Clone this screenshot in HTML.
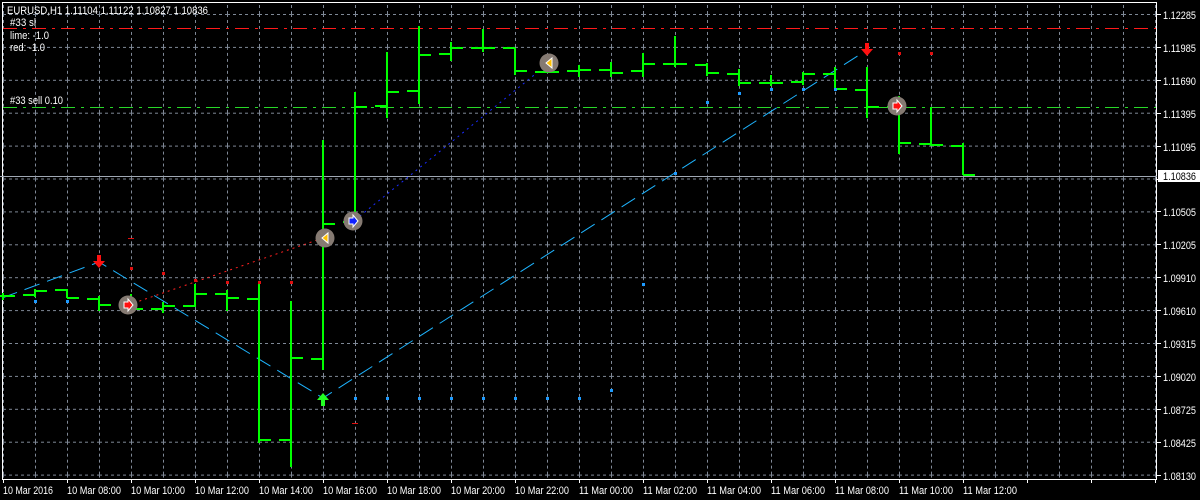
<!DOCTYPE html>
<html><head><meta charset="utf-8"><style>
html,body{margin:0;padding:0;background:#000;width:1200px;height:500px;overflow:hidden}
svg{display:block}
text{font-family:"Liberation Sans",sans-serif;font-size:11px;fill:#fff}
</style></head><body>
<svg width="1200" height="500" viewBox="0 0 1200 500" xmlns="http://www.w3.org/2000/svg" shape-rendering="crispEdges">
<defs>
<pattern id="g" x="35" y="14" width="32" height="32.9" patternUnits="userSpaceOnUse">
<path d="M0.5 0V32.9M0 0.5H32" stroke="#7f8896" stroke-width="1" stroke-dasharray="3,3" fill="none"/>
</pattern>
</defs>
<rect x="3" y="3" width="1153" height="475" fill="url(#g)"/>
<path d="M2.5 2V479.5H1156.5V2" stroke="#fff" fill="none"/>
<path d="M2 2.5H1157" stroke="#fff"/>
<g stroke="#fff">
<path d="M1157 14.5h4M1157 47.5h4M1157 80.5h4M1157 113.5h4M1157 146.5h4M1157 179.5h4M1157 211.5h4M1157 244.5h4M1157 277.5h4M1157 310.5h4M1157 343.5h4M1157 376.5h4M1157 409.5h4M1157 442.5h4M1157 475.5h4"/>
<path d="M3.5 479v4M67.5 479v4M131.5 479v4M195.5 479v4M259.5 479v4M323.5 479v4M387.5 479v4M451.5 479v4M515.5 479v4M579.5 479v4M643.5 479v4M707.5 479v4M771.5 479v4M835.5 479v4M899.5 479v4M963.5 479v4M1027.5 479v4M1091.5 479v4M1155.5 479v4"/>
</g>
<path d="M3 28.5H1156" stroke="#ff1a1a" stroke-dasharray="14,6,3,6"/>
<path d="M3 107.5H1156" stroke="#28d828" stroke-dasharray="14,6,3,6"/>
<path d="M0 176.5H1157" stroke="#a0a8b4"/>
<path d="M2 298L99 262L323 398L867 50" stroke="#1eb4ff" fill="none" stroke-dasharray="16,8" shape-rendering="auto"/>
<path d="M128 305L323 238" stroke="#ff2020" fill="none" stroke-dasharray="2,4" shape-rendering="auto"/>
<path d="M355 220L549 63" stroke="#1a2cff" fill="none" stroke-dasharray="2,4" shape-rendering="auto"/>
<path stroke="#00ff00" stroke-width="2" fill="none" d="
M3 293V300M-9 296H3M3 296H15
M35 289V297M23 295H35M35 291H47
M67 289V298M55 290H67M67 298H79
M99 296V311M87 299H99M99 305H111
M131 294V313M119 306H131M131 309H143
M163 302V313M151 309H163M163 306H175
M195 284V307M183 306H195M195 294H207
M227 290V311M215 294H227M227 298H239
M259 281V443M247 299H259M259 440H271
M291 301V467M279 440H291M291 358H303
M323 140V370M311 359H323M323 224H335
M355 92V226M343 222H355M355 107H367
M387 52V118M375 106H387M387 92H399
M419 26V104M407 91H419M419 55H431
M451 42V61M439 54H451M451 48H463
M483 29V52M471 48H483M483 48H495
M515 48V75M503 48H515M515 71H527
M547 64V72M535 72H547M547 72H559
M579 65V77M567 71H579M579 70H591
M611 62V77M599 70H611M611 73H623
M643 53V77M631 71H643M643 64H655
M675 36V67M663 64H675M675 64H687
M707 63V76M695 65H707M707 73H719
M739 69V86M727 74H739M739 83H751
M771 75V86M759 83H771M771 83H783
M803 72V85M791 82H803M803 74H815
M835 67V91M823 74H835M835 89H847
M867 67V118M855 90H867M867 107H879
M899 96V154M887 107H899M899 143H911
M931 107V146M919 144H931M931 145H943
M963 143V175M951 146H963M963 175H975"/>
<g fill="#1e9bff">
<rect x="34" y="300" width="3" height="3"/><rect x="66" y="300" width="3" height="3"/>
<rect x="354" y="397" width="3" height="3"/><rect x="386" y="397" width="3" height="3"/><rect x="418" y="397" width="3" height="3"/><rect x="450" y="397" width="3" height="3"/><rect x="482" y="397" width="3" height="3"/><rect x="514" y="397" width="3" height="3"/><rect x="546" y="397" width="3" height="3"/><rect x="578" y="397" width="3" height="3"/><rect x="610" y="389" width="3" height="3"/><rect x="642" y="283" width="3" height="3"/><rect x="674" y="172" width="3" height="3"/><rect x="706" y="101" width="3" height="3"/><rect x="738" y="92" width="3" height="3"/><rect x="770" y="88" width="3" height="3"/><rect x="802" y="88" width="3" height="3"/><rect x="834" y="88" width="3" height="3"/>
</g>
<g fill="#e01010">
<rect x="130" y="267" width="3" height="3"/><rect x="162" y="272" width="3" height="3"/><rect x="194" y="279" width="3" height="3"/><rect x="226" y="281" width="3" height="3"/><rect x="258" y="281" width="3" height="3"/><rect x="290" y="281" width="3" height="3"/>
<rect x="898" y="52" width="3" height="3"/><rect x="930" y="52" width="3" height="3"/>
<rect x="128" y="238" width="6" height="1"/><rect x="352" y="423" width="6" height="1"/>
</g>
<g fill="#857a72" shape-rendering="auto">
<circle cx="128" cy="305" r="9.5"/><circle cx="325" cy="238" r="9.5"/><circle cx="353" cy="221" r="9.5"/><circle cx="549" cy="63" r="9.5"/><circle cx="897" cy="106" r="9.5"/>
</g>
<g shape-rendering="auto">
<path d="M124 302h4v-3l5 6-5 6v-3h-4z" fill="#ff1010" stroke="#fff" stroke-width="1"/>
<path d="M893 103h4v-3l5 6-5 6v-3h-4z" fill="#ff1010" stroke="#fff" stroke-width="1"/>
<path d="M349 218h4v-3l5 6-5 6v-3h-4z" fill="#1020ff" stroke="#fff" stroke-width="1"/>
<path d="M328 233v10l-6-5z" fill="#ffc000" stroke="#fff" stroke-width="1"/>
<path d="M552 58v10l-6-5z" fill="#ffc000" stroke="#fff" stroke-width="1"/>
<path d="M97 255h4v6h4l-6 7-6-7h4z" fill="#ff1010"/>
<path d="M865 43h4v6h4l-6 7-6-7h4z" fill="#ff1010"/>
<path d="M321 406h4v-6h4l-6-7-6 7h4z" fill="#22ff22"/>
</g>
<g lengthAdjust="spacingAndGlyphs">
<text x="7" y="14" textLength="201" lengthAdjust="spacingAndGlyphs">EURUSD,H1  1.11104 1.11122 1.10827 1.10836</text>
<text x="10" y="26" textLength="26" lengthAdjust="spacingAndGlyphs">#33 sl</text>
<text x="10" y="39" textLength="39" lengthAdjust="spacingAndGlyphs">lime: -1.0</text>
<text x="10" y="51" textLength="35" lengthAdjust="spacingAndGlyphs">red: -1.0</text>
<text x="10" y="104" textLength="53" lengthAdjust="spacingAndGlyphs">#33 sell 0.10</text>
</g>
<g>
<text x="1163" y="19" textLength="33" lengthAdjust="spacingAndGlyphs">1.12285</text><text x="1163" y="52" textLength="33" lengthAdjust="spacingAndGlyphs">1.11985</text><text x="1163" y="85" textLength="33" lengthAdjust="spacingAndGlyphs">1.11690</text><text x="1163" y="118" textLength="33" lengthAdjust="spacingAndGlyphs">1.11395</text><text x="1163" y="151" textLength="33" lengthAdjust="spacingAndGlyphs">1.11095</text><text x="1163" y="216" textLength="33" lengthAdjust="spacingAndGlyphs">1.10505</text><text x="1163" y="249" textLength="33" lengthAdjust="spacingAndGlyphs">1.10205</text><text x="1163" y="282" textLength="33" lengthAdjust="spacingAndGlyphs">1.09910</text><text x="1163" y="315" textLength="33" lengthAdjust="spacingAndGlyphs">1.09610</text><text x="1163" y="348" textLength="33" lengthAdjust="spacingAndGlyphs">1.09315</text><text x="1163" y="381" textLength="33" lengthAdjust="spacingAndGlyphs">1.09020</text><text x="1163" y="414" textLength="33" lengthAdjust="spacingAndGlyphs">1.08725</text><text x="1163" y="447" textLength="33" lengthAdjust="spacingAndGlyphs">1.08425</text><text x="1163" y="480" textLength="33" lengthAdjust="spacingAndGlyphs">1.08130</text>
</g>
<rect x="1158" y="170" width="42" height="12" fill="#fff"/>
<text x="1163" y="180" style="fill:#000" textLength="33" lengthAdjust="spacingAndGlyphs">1.10836</text>
<g>
<text x="3" y="494" textLength="50" lengthAdjust="spacingAndGlyphs">10 Mar 2016</text><text x="67" y="494" textLength="54" lengthAdjust="spacingAndGlyphs">10 Mar 08:00</text><text x="131" y="494" textLength="54" lengthAdjust="spacingAndGlyphs">10 Mar 10:00</text><text x="195" y="494" textLength="54" lengthAdjust="spacingAndGlyphs">10 Mar 12:00</text><text x="259" y="494" textLength="54" lengthAdjust="spacingAndGlyphs">10 Mar 14:00</text><text x="323" y="494" textLength="54" lengthAdjust="spacingAndGlyphs">10 Mar 16:00</text><text x="387" y="494" textLength="54" lengthAdjust="spacingAndGlyphs">10 Mar 18:00</text><text x="451" y="494" textLength="54" lengthAdjust="spacingAndGlyphs">10 Mar 20:00</text><text x="515" y="494" textLength="54" lengthAdjust="spacingAndGlyphs">10 Mar 22:00</text><text x="579" y="494" textLength="54" lengthAdjust="spacingAndGlyphs">11 Mar 00:00</text><text x="643" y="494" textLength="54" lengthAdjust="spacingAndGlyphs">11 Mar 02:00</text><text x="707" y="494" textLength="54" lengthAdjust="spacingAndGlyphs">11 Mar 04:00</text><text x="771" y="494" textLength="54" lengthAdjust="spacingAndGlyphs">11 Mar 06:00</text><text x="835" y="494" textLength="54" lengthAdjust="spacingAndGlyphs">11 Mar 08:00</text><text x="899" y="494" textLength="54" lengthAdjust="spacingAndGlyphs">11 Mar 10:00</text><text x="963" y="494" textLength="54" lengthAdjust="spacingAndGlyphs">11 Mar 12:00</text>
</g>
</svg>
</body></html>
